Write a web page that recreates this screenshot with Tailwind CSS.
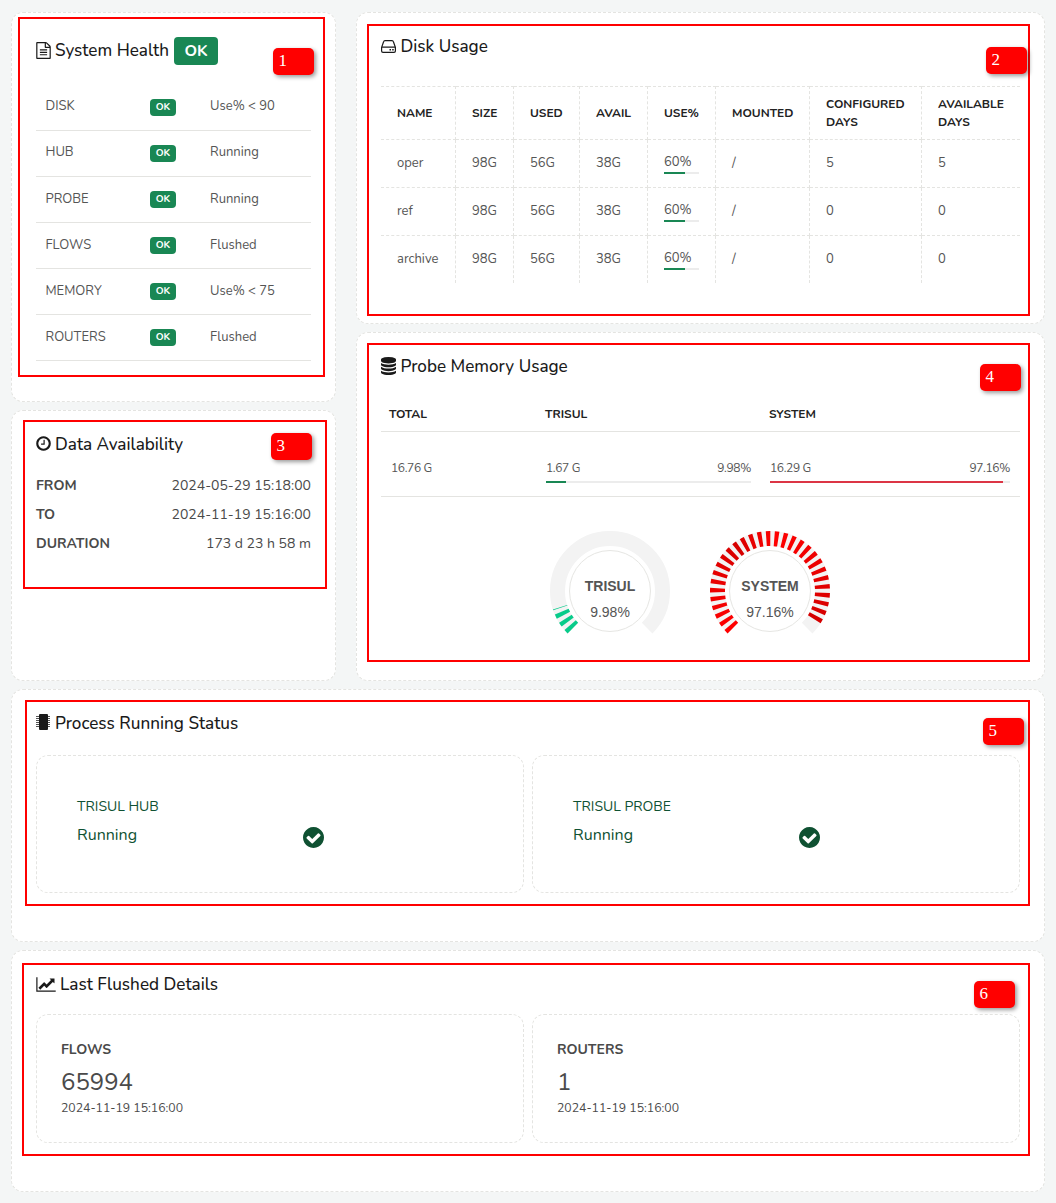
<!DOCTYPE html>
<html lang="en">
<head>
<meta charset="utf-8">
<title>System Health</title>
<script src="https://cdn.jsdelivr.net/npm/@tailwindcss/browser@4"></script>
</head>
<body class="relative w-[1056px] h-[1203px] overflow-hidden bg-[#f4f6f6] font-[Nunito,Lato,sans-serif] text-[#555] text-[13px]">
<main class="flex flex-col gap-2 pl-[11px] pt-3 w-[1045px]">
  <div class="flex justify-between">
    <div class="flex flex-col gap-2 w-[325px]">
      <section class="h-[390px] bg-white border border-dashed border-[#e4e4e1] rounded-xl px-6 pt-6">
        <h2 class="flex items-center h-7 text-[17.1px] font-medium text-[#1a1a1a] whitespace-nowrap">
          <svg class="w-[15px] h-[17px] mr-1 mb-0.5" viewBox="128 0 1536 1792" fill="currentColor"><path d="M1596 380q28 28 48 76t20 88v1152q0 40-28 68t-68 28h-1344q-40 0-68-28t-28-68v-1600q0-40 28-68t68-28h896q40 0 88 20t76 48zm-444-244v376h376q-10-29-22-41l-313-313q-12-12-41-22zm384 1528v-1024h-416q-40 0-68-28t-28-68v-416h-768v1536h1280zm-1024-864q0-14 9-23t23-9h704q14 0 23 9t9 23v64q0 14-9 23t-23 9h-704q-14 0-23-9t-9-23v-64zm736 224q14 0 23 9t9 23v64q0 14-9 23t-23 9h-704q-14 0-23-9t-9-23v-64q0-14 9-23t23-9h704zm0 256q14 0 23 9t9 23v64q0 14-9 23t-23 9h-704q-14 0-23-9t-9-23v-64q0-14 9-23t23-9h704z"/></svg>
          <span class="w-[119px] pb-px">System Health</span>
          <span class="w-11 h-7 rounded bg-[#198754] text-white font-bold text-[16px] flex items-center justify-center">OK</span>
        </h2>
        <div id="health" class="mt-5"></div>
      </section>
      <section class="h-[271px] bg-white border border-dashed border-[#e4e4e1] rounded-xl px-6 pt-5">
        <h2 class="flex items-center h-6 text-[17.1px] font-medium text-[#1a1a1a]">
          <svg class="w-[15px] h-[17px] mr-1" viewBox="128 0 1536 1792" fill="currentColor"><path d="M1024 544v448q0 14-9 23t-23 9h-320q-14 0-23-9t-9-23v-64q0-14 9-23t23-9h224v-352q0-14 9-23t23-9h64q14 0 23 9t9 23zm416 352q0-148-73-273t-198-198-273-73-273 73-198 198-73 273 73 273 198 198 273 73 273-73 198-198 73-273zm224 0q0 209-103 385.5t-279.5 279.5-385.5 103-385.5-103-279.5-279.5-103-385.5 103-385.5 279.5-279.5 385.5-103 385.5 103 279.5 279.5 103 385.5z"/></svg>
          <span class="pt-[3px]">Data Availability</span>
        </h2>
        <dl class="mt-4 text-[14px] leading-[29px] text-[#4a4a4a]">
          <div class="flex justify-between"><dt class="font-bold">FROM</dt><dd>2024-05-29 15:18:00</dd></div>
          <div class="flex justify-between"><dt class="font-bold">TO</dt><dd>2024-11-19 15:16:00</dd></div>
          <div class="flex justify-between"><dt class="font-bold">DURATION</dt><dd>173 d 23 h 58 m</dd></div>
        </dl>
      </section>
    </div>
    <div class="flex flex-col gap-2 w-[689px]">
      <section class="h-[312px] bg-white border border-dashed border-[#e4e4e1] rounded-xl px-6 pt-[21px]">
        <h2 class="flex items-center h-6 text-[17.1px] font-medium text-[#1a1a1a]">
          <svg class="w-[15px] h-[13px] mr-1" viewBox="0 0 15 13" fill="none" stroke="currentColor" stroke-width="1.2"><path d="M.6 7.4 2.6 1.7Q2.9.6 4 .6h7q1.100 0 1.400 1.100l2 5.700v3.600q0 1.400-1.400 1.400H2Q.6 12.400.6 11zM.8 7.200h13.400"/><path d="M8.500 9.800h1.500M11.200 9.800h1.500" stroke-width="1.500"/></svg>
          <span class="pt-0.5 pl-[0.5px]">Disk Usage</span>
        </h2>
        <div id="disk" class="mt-7 grid grid-cols-[75px_58px_66px_68px_68px_94px_112px_98px] grid-rows-[54px_48px_48px_47px] border-[#e4e4e1]"></div>
      </section>
      <section class="h-[349px] bg-white border border-dashed border-[#e4e4e1] rounded-xl px-6 pt-[21px]">
        <h2 class="flex items-center h-6 text-[17.1px] font-medium text-[#1a1a1a]">
          <svg class="w-[15px] h-[18px] mr-1" viewBox="128 0 1536 1792" preserveAspectRatio="none" fill="currentColor"><path d="M896 768q237 0 443-43t325-127v170q0 69-103 128t-280 93.500-385 34.500-385-34.500-280-93.500-103-128v-170q119 84 325 127t443 43zm0 768q237 0 443-43t325-127v170q0 69-103 128t-280 93.500-385 34.500-385-34.500-280-93.500-103-128v-170q119 84 325 127t443 43zm0-384q237 0 443-43t325-127v170q0 69-103 128t-280 93.500-385 34.500-385-34.500-280-93.500-103-128v-170q119 84 325 127t443 43zm0-1152q208 0 385 34.500t280 93.500 103 128v128q0 69-103 128t-280 93.500-385 34.500-385-34.500-280-93.500-103-128v-128q0-69 103-128t280-93.500 385-34.500z"/></svg>
          <span class="pt-0.5 pl-[0.5px]">Probe Memory Usage</span>
        </h2>
        <div class="mt-[18px] h-9 grid grid-cols-[156px_224px_259px] items-center border-b border-[#e4e4e1] text-[12px] font-bold text-[#222]">
          <span class="pl-2">TOTAL</span><span class="pl-2">TRISUL</span><span class="pl-2">SYSTEM</span>
        </div>
        <div class="h-[65px] grid grid-cols-[156px_224px_259px] border-b border-[#e4e4e1] text-[12px] tracking-[-0.35px] pt-[27px] leading-[18px]">
          <div class="pl-2.5">16.76 G</div>
          <div class="pl-[9px] pr-[10px]">
            <div class="flex justify-between"><span>1.67 G</span><span>9.98%</span></div>
            <div class="mt-1 h-0.5 bg-[#ececec]"><div class="h-0.5 bg-[#198754]" style="width:9.98%"></div></div>
          </div>
          <div class="pl-[9px] pr-[10px]">
            <div class="flex justify-between"><span>16.29 G</span><span>97.16%</span></div>
            <div class="mt-1 h-0.5 bg-[#ececec]"><div class="h-0.5 bg-[#dc3545]" style="width:97.16%"></div></div>
          </div>
        </div>
        <div class="flex justify-center gap-10 pt-[34px] pr-[22px]">
          <svg class="gauge w-[120px] h-[120px]" data-value="9.98" data-name="TRISUL" viewBox="-60 -60 120 120"></svg>
          <svg class="gauge w-[120px] h-[120px]" data-value="97.16" data-name="SYSTEM" viewBox="-60 -60 120 120"></svg>
        </div>
      </section>
    </div>
  </div>
  <section class="w-[1034px] h-[253px] bg-white border border-dashed border-[#e4e4e1] rounded-xl px-6 pt-[21px]">
    <h2 class="flex items-center h-6 text-[17.1px] font-medium text-[#1a1a1a]">
      <svg class="w-[15px] h-[16px] mr-1 mb-0.5" viewBox="0 0 15 16" fill="currentColor"><rect x="3" y="0" width="9" height="16" rx="1"/><path d="M0 2.500h14M0 4.500h14M0 6.500h14M0 8.500h14M0 10.500h14M0 12.500h14" stroke="currentColor" stroke-width="1" stroke-opacity=".75" shape-rendering="crispEdges"/></svg>
      <span class="pt-0.5">Process Running Status</span>
    </h2>
    <div class="mt-5 grid grid-cols-2 gap-2 text-[#0f5132]">
      <div class="h-[138px] border border-dashed border-[#e4e4e1] rounded-xl pl-10 pt-9 flex">
        <div class="w-[226px]"><div class="text-[14px] leading-[29px]">TRISUL HUB</div><div class="text-[16px] leading-[29px]">Running</div></div>
        <svg class="w-[21px] h-[21px] mt-[35px]" viewBox="128 128 1536 1536" fill="currentColor"><path d="M1412 734q0-28-18-46l-91-90q-19-19-45-19t-45 19l-408 407-226-226q-19-19-45-19t-45 19l-91 90q-18 18-18 46 0 27 18 45l362 362q19 19 45 19 27 0 46-19l543-543q18-18 18-45zm252 162q0 209-103 385.500t-279.500 279.500-385.500 103-385.500-103-279.500-279.500-103-385.500 103-385.500 279.500-279.500 385.500-103 385.500 103 279.500 279.500 103 385.500z"/></svg>
      </div>
      <div class="h-[138px] border border-dashed border-[#e4e4e1] rounded-xl pl-10 pt-9 flex">
        <div class="w-[226px]"><div class="text-[14px] leading-[29px]">TRISUL PROBE</div><div class="text-[16px] leading-[29px]">Running</div></div>
        <svg class="w-[21px] h-[21px] mt-[35px]" viewBox="128 128 1536 1536" fill="currentColor"><path d="M1412 734q0-28-18-46l-91-90q-19-19-45-19t-45 19l-408 407-226-226q-19-19-45-19t-45 19l-91 90q-18 18-18 46 0 27 18 45l362 362q19 19 45 19 27 0 46-19l543-543q18-18 18-45zm252 162q0 209-103 385.500t-279.500 279.500-385.500 103-385.500-103-279.500-279.500-103-385.500 103-385.500 279.500-279.500 385.500-103 385.500 103 279.500 279.500 103 385.500z"/></svg>
      </div>
    </div>
  </section>
  <section class="w-[1034px] h-[242px] bg-white border border-dashed border-[#e4e4e1] rounded-xl px-6 pt-[21px]">
    <h2 class="flex items-center h-6 text-[17.1px] font-medium text-[#1a1a1a]">
      <svg class="w-5 h-[17px] mr-1" viewBox="0 0 2048 1792" fill="currentColor"><path d="M2048 1536v128h-2048v-1536h128v1408h1920zm-128-1248v435q0 21-19.500 29.500t-35.500-7.500l-121-121-633 633q-10 10-23 10t-23-10l-233-233-416 416-192-192 585-585q10-10 23-10t23 10l233 233 464-464-121-121q-16-16-7.500-35.500t29.500-19.500h435q14 0 23 9t9 23z"/></svg>
      <span class="pt-0.5">Last Flushed Details</span>
    </h2>
    <div class="mt-[18px] grid grid-cols-2 gap-2 text-[#4a4a4a]">
      <div class="h-[129px] border border-dashed border-[#e4e4e1] rounded-xl pl-6 pt-[25px]"><div class="font-bold text-[14px] leading-5">FLOWS</div><div class="mt-1 text-[24px] leading-9">65994</div><div class="text-[12.250px] leading-4">2024-11-19 15:16:00</div></div>
      <div class="h-[129px] border border-dashed border-[#e4e4e1] rounded-xl pl-6 pt-[25px]"><div class="font-bold text-[14px] leading-5">ROUTERS</div><div class="mt-1 text-[24px] leading-9">1</div><div class="text-[12.250px] leading-4">2024-11-19 15:16:00</div></div>
    </div>
  </section>
</main>

<!-- Numbered callouts over the panels -->
<div class="absolute left-[18px] top-[17px] w-[307px] h-[360px] border-2 border-[#f00]"></div>
<div class="absolute left-[367px] top-[24px] w-[663px] h-[292px] border-2 border-[#f00]"></div>
<div class="absolute left-[23px] top-[420px] w-[304px] h-[169px] border-2 border-[#f00]"></div>
<div class="absolute left-[367px] top-[343px] w-[663px] h-[319px] border-2 border-[#f00]"></div>
<div class="absolute left-[25px] top-[700px] w-[1005px] h-[206px] border-2 border-[#f00]"></div>
<div class="absolute left-[22px] top-[963px] w-[1008px] h-[193px] border-2 border-[#f00]"></div>
<div class="absolute left-[273px] top-[48px] w-[41px] h-[27px] rounded-[5px] bg-[#f00] text-white pl-[5.500px] font-['Liberation_Serif',serif] text-[17px] leading-[26px] shadow-[2px_2px_4px_rgba(0,0,0,0.4)]">1</div>
<div class="absolute left-[986px] top-[47px] w-[41px] h-[27px] rounded-[5px] bg-[#f00] text-white pl-[5.500px] font-['Liberation_Serif',serif] text-[17px] leading-[26px] shadow-[2px_2px_4px_rgba(0,0,0,0.4)]">2</div>
<div class="absolute left-[271px] top-[433px] w-[41px] h-[27px] rounded-[5px] bg-[#f00] text-white pl-[5.500px] font-['Liberation_Serif',serif] text-[17px] leading-[26px] shadow-[2px_2px_4px_rgba(0,0,0,0.4)]">3</div>
<div class="absolute left-[980px] top-[364px] w-[41px] h-[27px] rounded-[5px] bg-[#f00] text-white pl-[5.500px] font-['Liberation_Serif',serif] text-[17px] leading-[26px] shadow-[2px_2px_4px_rgba(0,0,0,0.4)]">4</div>
<div class="absolute left-[983px] top-[718px] w-[41px] h-[27px] rounded-[5px] bg-[#f00] text-white pl-[5.500px] font-['Liberation_Serif',serif] text-[17px] leading-[26px] shadow-[2px_2px_4px_rgba(0,0,0,0.4)]">5</div>
<div class="absolute left-[974px] top-[981px] w-[41px] h-[27px] rounded-[5px] bg-[#f00] text-white pl-[5.500px] font-['Liberation_Serif',serif] text-[17px] leading-[26px] shadow-[2px_2px_4px_rgba(0,0,0,0.4)]">6</div>

<script>
const checks = [['DISK','Use% < 90'],['HUB','Running'],['PROBE','Running'],['FLOWS','Flushed'],['MEMORY','Use% < 75'],['ROUTERS','Flushed']];
document.getElementById('health').innerHTML = checks.map(([n, v], i) =>
  `<div class="h-[46px] flex items-center border-b border-[#e4e4e1] pl-[9.5px]"><span class="w-[104.5px] ${i < 2 ? 'pb-px' : 'pt-px'}">${n}</span><span class="w-[26px] h-[17px] mr-[34px] rounded-[4px] bg-[#198754] text-white font-bold text-[10px] flex items-center justify-center">OK</span><span class="${i < 2 ? 'pb-px' : 'pt-px'}">${v.replace('<', '&lt;')}</span></div>`).join('');

const heads = ['NAME','SIZE','USED','AVAIL','USE%','MOUNTED','CONFIGURED DAYS','AVAILABLE DAYS'];
const rows = [['oper','98G','56G','38G',60,'/',5,5],['ref','98G','56G','38G',60,'/',0,0],['archive','98G','56G','38G',60,'/',0,0]];
let cells = heads.map((h, i) => `<div class="flex items-center pl-4 border-dashed border-[#e4e4e1] border-t border-b text-[12px] leading-[18px] font-bold text-[#222] ${i < 7 ? 'border-r' : ''}">${h.replace(' ', '<br>')}</div>`).join('');
rows.forEach((r, j) => r.forEach((c, i) => {
  const body = i === 4 ? `<div class="w-[35px] leading-[20px] pb-0.5">${c}%<div class="h-0.5 bg-[#ececec]"><div class="h-0.5 bg-[#198754]" style="width:${c}%"></div></div></div>` : c;
  cells += `<div class="flex items-center pl-4 border-dashed border-[#e4e4e1] ${i < 7 ? 'border-r' : ''} ${j < 2 ? 'border-b' : ''}">${body}</div>`;
}));
document.getElementById('disk').innerHTML = cells;

// Gauges sweep 270 degrees clockwise from the lower left
const pt = (r, deg) => { const a = (deg - 225) * Math.PI / 180; return (r * Math.cos(a)).toFixed(2) + ' ' + (r * Math.sin(a)).toFixed(2); };
const arc = (a, b) => `M${pt(52.5, a)}A52.5 52.5 0 ${b - a > 180 ? 1 : 0} 1 ${pt(52.5, b)}`;
const stops = [[0, 255], [11, 215], [16, 255], [30, 210]];
const red = i => { for (let k = 1; k < stops.length; k++) { const [x0, y0] = stops[k - 1], [x1, y1] = stops[k]; if (i <= x1) return Math.round(y0 + (y1 - y0) * (i - x0) / (x1 - x0)); } return 210; };
document.querySelectorAll('.gauge').forEach(g => {
  const v = +g.dataset.value, end = v * 2.7, step = 8.73;
  let s = `<path d="${arc(0, 270)}" fill="none" stroke="#f3f3f3" stroke-width="15"/>`;
  for (let i = 0; i * step < end - 0.5; i++)
    s += `<path d="${arc(i * step, Math.min(i * step + 4.365, end))}" fill="none" stroke-width="15" stroke="${v > 50 ? `rgb(${red(i)},0,0)` : '#08cb8a'}"/>`;
  s += `<circle r="40.5" fill="#fff" stroke="#e6e6e3"/>`;
  s += `<g text-anchor="middle" fill="#555" font-family="Liberation Sans, sans-serif" font-size="14"><text y="0" font-weight="700">${g.dataset.name}</text><text y="26">${v}%</text></g>`;
  g.innerHTML = s;
});
</script>
</body>
</html>
